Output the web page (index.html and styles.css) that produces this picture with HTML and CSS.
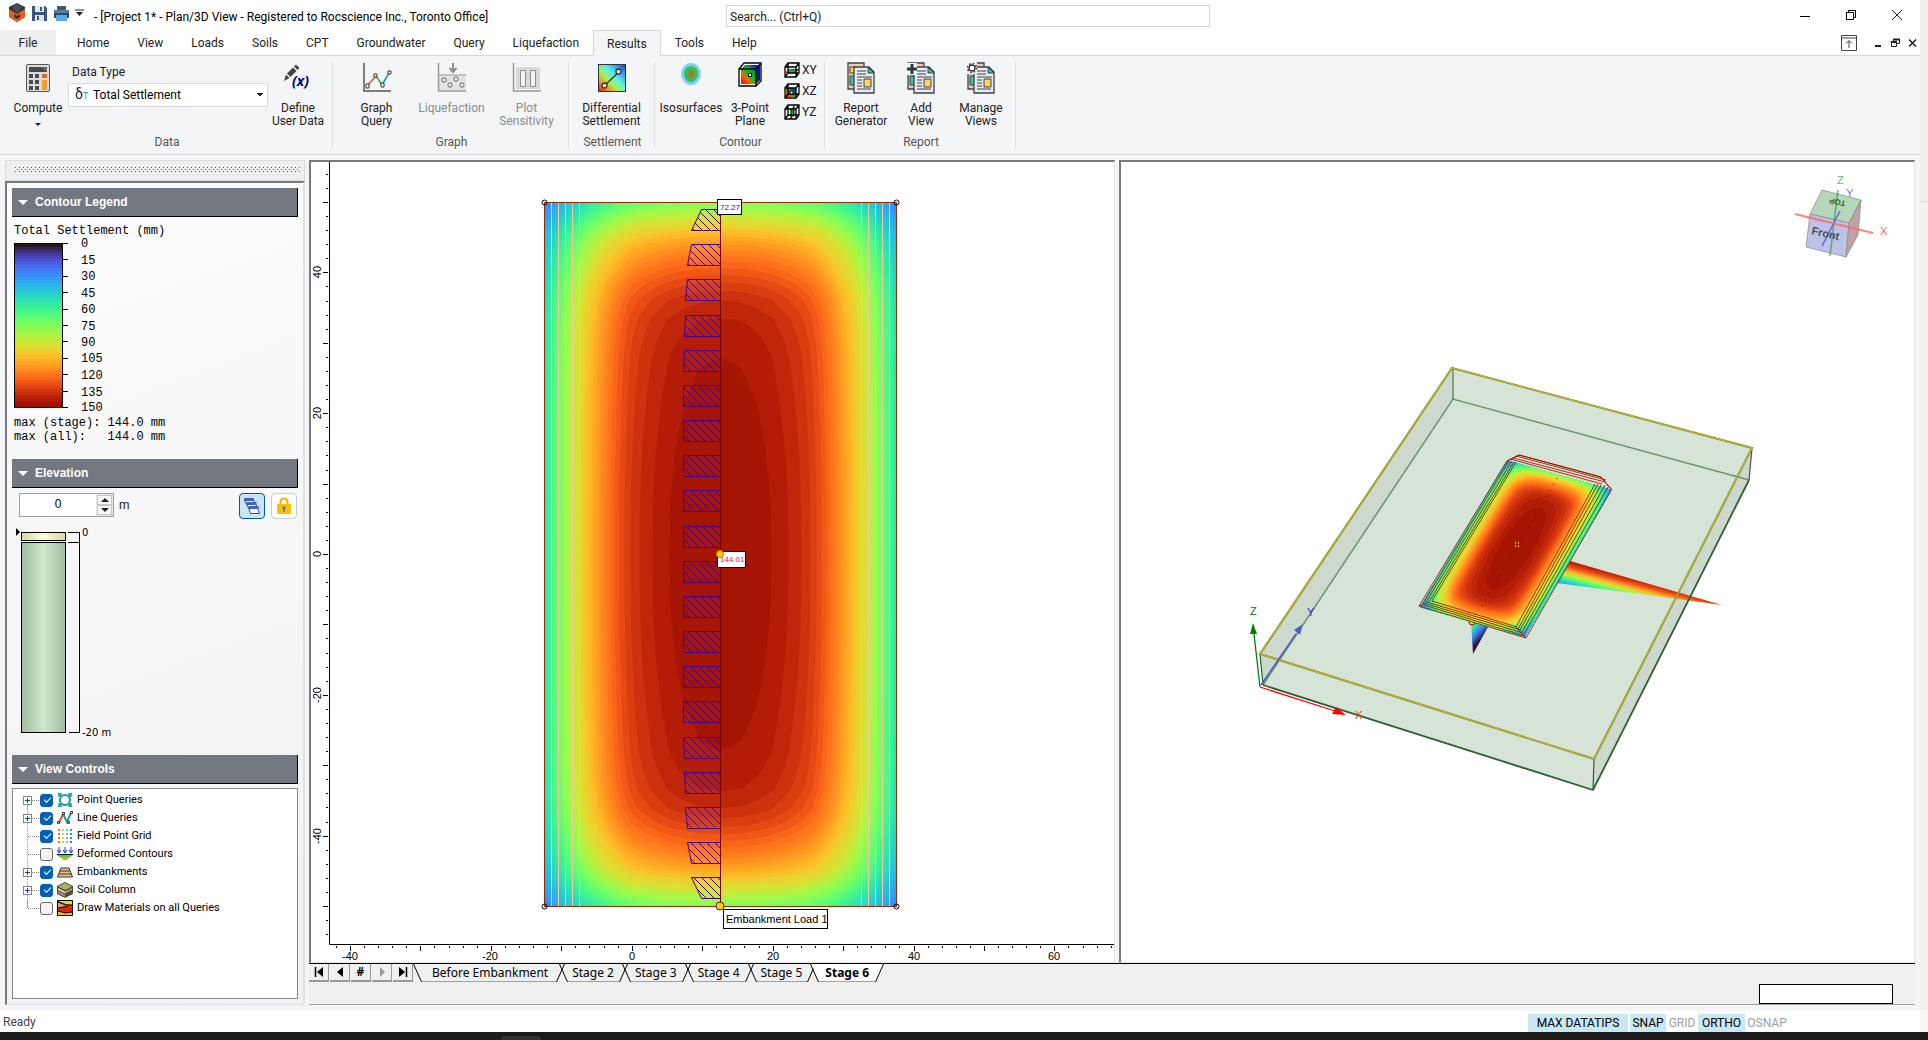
FILE: index.html
```html
<!DOCTYPE html>
<html lang="en">
<head>
<meta charset="utf-8">
<title>Project 1 - Plan/3D View</title>
<link rel="stylesheet" href="styles.css">
</head>
<body>
<svg class="defs" width="0" height="0" aria-hidden="true">
  <defs>
    <linearGradient id="rainbow" x1="0" y1="1" x2="1" y2="0">
      <stop offset="0" stop-color="#d81c10"/><stop offset=".2" stop-color="#f08a28"/><stop offset=".38" stop-color="#a8f050"/><stop offset=".58" stop-color="#58f0e8"/><stop offset=".78" stop-color="#38a0f8"/><stop offset="1" stop-color="#1038d0"/>
    </linearGradient>
    <linearGradient id="cubeface" x1="0" y1="1" x2="1" y2="0">
      <stop offset=".1" stop-color="#ff2000"/><stop offset=".3" stop-color="#e87000"/><stop offset=".42" stop-color="#20b820"/><stop offset=".62" stop-color="#10a830"/><stop offset=".85" stop-color="#0020f0"/>
    </linearGradient>
    <symbol id="i-docs" viewBox="0 0 28 32">
      <path d="M1 1H17V27H1Z" fill="#f6c9a8" stroke="#3d4148" stroke-width="1.3"/>
      <path d="M3 5h6v6H3z" fill="#ffd766" stroke="#3d4148"/><path d="M3 14h5v9H3z" fill="#3fc1a2" stroke="#3d4148"/>
      <path d="M7 5H22L27 10V31H7Z" fill="#e8ebf2" stroke="#3d4148" stroke-width="1.3"/>
      <path d="M21 5v6h6z" fill="#3fc1a2" stroke="#3d4148"/>
      <path d="M10 9h9M10 12h9M10 15h15M10 18h5M10 21h5M10 24h5M10 27h14" stroke="#3d4148"/>
      <path d="M17 17h7v8h-7z" fill="#ffd35c" stroke="#3d4148"/>
    </symbol>
    <symbol id="i-wire" viewBox="0 0 16 16"><path d="M1 5H12V15H1ZM1 5L4 1H15V11L12 15M12 5L15 1M4 1V11H15M4 11L1 15" fill="none" stroke="#000" stroke-width="1.300"/></symbol>
    <symbol id="t-plus" viewBox="0 0 19 18"><path d="M11 9.500H19" stroke="#808080" stroke-dasharray="1 1"/><rect x="2.500" y="5.500" width="8" height="8" fill="#fff" stroke="#848484"/><path d="M4 9.500h5M6.500 7v5" stroke="#1c3f94"/></symbol>
    <symbol id="t-leaf" viewBox="0 0 19 18"><path d="M7 9.500H19" stroke="#808080" stroke-dasharray="1 1"/></symbol>
    <pattern id="hatch" width="8" height="8" patternUnits="userSpaceOnUse"><path d="M-1 -1L9 9" stroke="#4b0082"/></pattern>
    <linearGradient id="clay"><stop offset="0" stop-color="#9fbd9f"/><stop offset=".5" stop-color="#d0e6d0"/><stop offset="1" stop-color="#a1bca0"/></linearGradient>
    <linearGradient id="sand"><stop offset="0" stop-color="#dcd79c"/><stop offset=".5" stop-color="#ffffd8"/><stop offset="1" stop-color="#dcd79c"/></linearGradient>
    <linearGradient id="beam" gradientUnits="userSpaceOnUse" x1="1570" y1="561" x2="1564" y2="584">
      <stop offset="0" stop-color="#a81000"/><stop offset=".25" stop-color="#f05018"/><stop offset=".45" stop-color="#fcb830"/><stop offset=".6" stop-color="#b8f438"/><stop offset=".75" stop-color="#50f878"/><stop offset=".9" stop-color="#20d0d8"/><stop offset="1" stop-color="#30a0f8"/>
    </linearGradient>
    <linearGradient id="dip" gradientUnits="userSpaceOnUse" x1="1471" y1="624" x2="1484" y2="636">
      <stop offset="0" stop-color="#80f850"/><stop offset=".3" stop-color="#28d8c0"/><stop offset=".6" stop-color="#3c80f4"/><stop offset="1" stop-color="#30123b"/>
    </linearGradient>
  </defs>
</svg>

<div class="screen">
<div class="app">
  <header class="titlebar">
    <div class="quick">
      <svg width="18" height="20" viewBox="0 0 18 20"><path d="M9 0L17 4V14L9 19L1 14V4Z" fill="#30343a"/><path d="M1 6L9 11L17 6V14L9 19L1 14Z" fill="#e85c20"/><path d="M4 4L9 1L14 4L9 10Z" fill="#4a4f56"/><path d="M6 11L9 13L12 11V14L9 16L6 14Z" fill="#30343a"/></svg>
      <svg width="17" height="17" viewBox="0 0 17 17"><path d="M1 1H14L16 3V16H1Z" fill="#3b5680"/><path d="M4 1h9v6H4z" fill="#e4edf8"/><path d="M4 10h9v6H4z" fill="#dfe6ef"/><path d="M9 2h2v4H9zM6 11h2v4H6z" fill="#3b5680"/></svg>
      <svg width="17" height="17" viewBox="0 0 17 17"><path d="M4 1h9v4H4z" fill="#4d5560"/><path d="M1 5h15v8H1z" fill="#38485c"/><path d="M3 10h11v6H3z" fill="#59a9e8"/><path d="M1 5h15v3H1z" fill="#4d7fae"/></svg>
      <svg width="9" height="8" viewBox="0 0 9 8"><path d="M0 1h9" stroke="#222"/><path d="M1 3h7L4.500 7z" fill="#222"/></svg>
    </div>
    <h1 class="title">- [Project 1* - Plan/3D View - Registered to Rocscience Inc., Toronto Office]</h1>
    <input class="search" type="text" aria-label="Search" placeholder="Search... (Ctrl+Q)">
    <div class="winbtns">
      <button aria-label="Minimize"><svg width="12" height="12"><path d="M1 7.500h10" stroke="#000"/></svg></button>
      <button aria-label="Restore"><svg width="12" height="12"><path d="M1.500 3.500h7v7h-7zM3.500 3V1.500h7v7H9" fill="none" stroke="#000"/></svg></button>
      <button aria-label="Close"><svg width="12" height="12"><path d="M1 1L11 11M11 1L1 11" stroke="#222"/></svg></button>
    </div>
  </header>

  <nav class="menu">
    <button class="file">File</button><button>Home</button><button>View</button><button>Loads</button><button>Soils</button><button>CPT</button><button>Groundwater</button><button>Query</button><button>Liquefaction</button><button class="current">Results</button><button>Tools</button><button>Help</button>
    <div class="docbtns">
      <button aria-label="Collapse ribbon"><svg width="16" height="17"><path d="M.5 1.500h15v15H.5zM.5 4h15M8 14V7M5 9.500L8 6.500L11 9.500" fill="none" stroke="#444"/></svg></button>
      <button aria-label="Minimize view"><svg width="9" height="10"><path d="M1 8h6" stroke="#222" stroke-width="2"/></svg></button>
      <button aria-label="Restore view"><svg width="9" height="10"><path d="M.5 4.500h5v4h-5zM2.500 4V1.500h6v4H6" fill="none" stroke="#222"/><path d="M0 4h6M2 1.500h7" stroke="#222" stroke-width="2"/></svg></button>
      <button aria-label="Close view"><svg width="9" height="10"><path d="M1 1.500L8 8.500M8 1.500L1 8.500" stroke="#222" stroke-width="1.600"/></svg></button>
    </div>
  </nav>

  <div class="ribbon">
    <section class="group g-data">
      <div class="tools">
        <button class="tool w-compute">
          <svg width="24" height="32" viewBox="0 0 24 32"><rect x=".5" y="2.500" width="23" height="27" rx="1.500" fill="#dcdcdc" stroke="#555"/><path d="M3 5h18v5H3z" fill="#484848"/><path d="M14 5h7v5z" fill="#666"/><path d="M3 12h4v4H3zM9 12h4v4H9zM3 18h4v4H3zM9 18h4v4H9zM3 24h4v4H3zM9 24h4v4H9z" fill="#4c4c4c"/><path d="M16 12h5v4h-5z" fill="#e8641e"/><path d="M16 18h5v10h-5z" fill="#f79a30"/></svg>
          <span>Compute</span><i class="down"></i></button>
        <div class="dtype">
          <label for="dt">Data Type</label>
          <div class="combo"><span class="delta">δ<sub>T</sub></span><select id="dt"><option>Total Settlement</option></select></div>
        </div>
        <button class="tool w-define">
          <svg width="28" height="32" viewBox="0 0 28 32"><path d="M0 19L2 12.500L5.500 16Z" fill="#444"/><path d="M3 11.500L9 5.500L12.500 9L6.500 15Z" fill="#444"/><path d="M10 4.500L12 2.500L15.500 6L13.500 8Z" fill="#444"/><text x="8" y="24" class="fx">(x)</text></svg>
          <span>Define<br>User Data</span></button>
      </div>
      <h2>Data</h2>
    </section>
    <section class="group g-graph">
      <div class="tools">
        <button class="tool w-m"><svg width="30" height="32" viewBox="0 0 30 32"><path d="M2 1V29H29" fill="none" stroke="#555" stroke-width="1.500"/><path d="M5 24L14 14" stroke="#f05030" stroke-width="1.500"/><path d="M14 14L20 23" stroke="#30b030" stroke-width="1.500"/><path d="M20 23L27 11" stroke="#00a0b0" stroke-width="1.500"/><path d="M4 22h3v4H4zM12 12h3v3h-3zM19 21h3v4h-3zM26 9h3v3h-3z" fill="#fff" stroke="#333"/></svg><span>Graph<br>Query</span></button>
        <button class="tool w-m" disabled><svg width="30" height="32" viewBox="0 0 30 32"><path d="M2 13h27v15H2z" fill="#e3e3e3"/><path d="M1.500 1V29H29" fill="none" stroke="#999" stroke-width="1.500"/><path d="M2 13h27" stroke="#999"/><path d="M16 1V9M12.500 6L16 10L19.500 6" fill="none" stroke="#8c8c8c" stroke-width="2"/><g fill="#f4f5f7" stroke="#8c8c8c" stroke-width="1.300"><circle cx="7" cy="18" r="2"/><circle cx="13" cy="23" r="2"/><circle cx="19" cy="17" r="2"/><circle cx="25" cy="23" r="2"/></g></svg><span>Liquefaction</span></button>
        <button class="tool w-m" disabled><svg width="30" height="32" viewBox="0 0 30 32"><path d="M1.500 1V29H29" fill="none" stroke="#999" stroke-width="1.500"/><path d="M4 5h24v22H4z" fill="#d9d9d9"/><path d="M8.500 8.500h5v16h-5zM18.500 8.500h5v16h-5z" fill="#f4f5f7" stroke="#8c8c8c"/></svg><span>Plot<br>Sensitivity</span></button>
      </div>
      <h2>Graph</h2>
    </section>
    <section class="group g-settle">
      <div class="tools">
        <button class="tool w-m"><svg width="28" height="32" viewBox="0 0 28 32"><rect x=".5" y="2.500" width="27" height="27" fill="url(#rainbow)" stroke="#333"/><path d="M7 23L21 10" stroke="#333" stroke-width="1.300"/><circle cx="6.500" cy="23.500" r="2.500" fill="#ffeeb0" stroke="#333" stroke-width="1.300"/><circle cx="20.500" cy="9.500" r="2.500" fill="#ffeeb0" stroke="#333" stroke-width="1.300"/></svg><span>Differential<br>Settlement</span></button>
      </div>
      <h2>Settlement</h2>
    </section>
    <section class="group g-contour">
      <div class="tools">
        <button class="tool w-iso"><svg width="22" height="32" viewBox="0 0 22 32"><ellipse cx="11" cy="12" rx="10" ry="11" fill="#84cdfa"/><ellipse cx="11" cy="12" rx="7" ry="8" fill="#28c458"/><ellipse cx="11" cy="12" rx="4" ry="5" fill="#789c38"/><ellipse cx="11" cy="12" rx="2" ry="3" fill="#a87030"/></svg><span>Isosurfaces</span></button>
        <button class="tool w-pt"><svg width="24" height="32" viewBox="0 0 24 32"><path d="M1 7L6 1H23L18 7Z" fill="#fff"/><path d="M3 7L7 3H22V18L18 22H3Z" fill="url(#cubeface)"/><path d="M19 7L22 3V18L19 21Z" fill="#0018b0"/><path d="M1 7H18V24H1ZM1 7L6 1H23V19L18 24M18 7L23 1" fill="none" stroke="#000" stroke-width="1.300"/><path d="M10.500 11.500h3v3h-3z" fill="#fff" stroke="#000"/></svg><span>3-Point<br>Plane</span></button>
        <div class="planes">
          <button><svg width="16" height="16"><path d="M1 11L5 7H15L12 11Z" fill="url(#cubeface)"/><use href="#i-wire"/></svg>XY</button>
          <button><svg width="16" height="16"><path d="M2 5H12V14H2Z" fill="url(#cubeface)"/><use href="#i-wire"/><path d="M6 8h3v3H6z" fill="#fff" stroke="#000"/></svg>XZ</button>
          <button><svg width="16" height="16"><path d="M7 5L10 2V12L7 15Z" fill="url(#cubeface)"/><use href="#i-wire"/><path d="M7 5V15M10 2V12" stroke="#000"/></svg>YZ</button>
        </div>
      </div>
      <h2>Contour</h2>
    </section>
    <section class="group g-report">
      <div class="tools">
        <button class="tool w-rep"><svg width="28" height="32"><use href="#i-docs"/></svg><span>Report<br>Generator</span></button>
        <button class="tool w-rep"><svg width="28" height="32"><use href="#i-docs"/><path d="M-1 1h11v12H-1z" fill="#f4f5f7"/><path d="M5 2V12M0 7H10" stroke="#333640" stroke-width="3"/></svg><span>Add<br>View</span></button>
        <button class="tool w-rep"><svg width="28" height="32"><use href="#i-docs"/><path d="M-1 0h11v12H-1z" fill="#f4f5f7"/><circle cx="5" cy="6" r="3" fill="#fff" stroke="#333640" stroke-width="1.400"/><circle cx="5" cy="6" r="4.500" fill="none" stroke="#333640" stroke-width="1.600" stroke-dasharray="1.600 1.930"/></svg><span>Manage<br>Views</span></button>
      </div>
      <h2>Report</h2>
    </section>
  </div>

  <main class="work">
    <aside class="dock">
      <div class="grip"><i></i></div>
      <div class="panels">
        <section class="panel p-legend">
          <h3><button>Contour Legend</button></h3>
          <svg class="legend" width="286" height="228" viewBox="0 0 286 228">
            <text x="2" y="17">Total Settlement (mm)</text>
            <g id="legend-bands"></g>
            <rect x="2.500" y="26.500" width="48" height="164" fill="none" stroke="#000"/>
            <g id="legend-ticks" stroke="#000"></g>
            <g><text x="69" y="30">0</text><text x="69" y="47">15</text><text x="69" y="63">30</text><text x="69" y="80">45</text><text x="69" y="96">60</text><text x="69" y="113">75</text><text x="69" y="129">90</text><text x="69" y="145">105</text><text x="69" y="162">120</text><text x="69" y="179">135</text><text x="69" y="194">150</text></g>
            <text x="2" y="209">max (stage): 144.0 mm</text>
            <text x="2" y="223" xml:space="preserve">max (all):   144.0 mm</text>
          </svg>
        </section>
        <section class="panel p-elev">
          <h3><button>Elevation</button></h3>
          <div class="elev-row">
            <div class="spin"><input type="text" id="elev" value="0"><span class="arrows"><button aria-label="Raise"><i class="up"></i></button><button aria-label="Lower"><i class="down"></i></button></span></div>
            <label for="elev">m</label>
            <button class="sq on" aria-label="Layers"><svg width="18" height="18"><g fill="#f4f6fc" stroke="#3b4a80"><path d="M1.500 2.500h9l2 5h-9z"/><path d="M3.500 6.500h9l2 5h-9z"/><path d="M5.500 10.500h9l2 6h-9z"/></g><path d="M1 2.500h10M3.500 6.500h10M5.500 10.500h10" stroke="#4060d0" stroke-width="3"/></svg></button>
            <button class="sq" aria-label="Lock"><svg width="16" height="18"><path d="M4.500 8V5a3.500 3.500 0 0 1 7 0V8" fill="none" stroke="#f5b400" stroke-width="2.200"/><rect x="1" y="7" width="14" height="10" rx="1" fill="#fbc108"/><circle cx="8" cy="11" r="1.800" fill="#777"/><path d="M8 11v4" stroke="#777" stroke-width="1.500"/></svg></button>
          </div>
          <svg class="column" width="286" height="222" viewBox="0 0 286 222">
            <path d="M4 7L8 11L4 15Z"/>
            <rect x="9.500" y="11.500" width="44" height="8" fill="url(#sand)" stroke="#000"/>
            <rect x="9.500" y="21.500" width="44" height="190" fill="url(#clay)" stroke="#000"/>
            <path d="M56 11.500H67.500V211.500H57M56 21.500H67" fill="none" stroke="#000"/>
            <text x="70" y="15">0</text><text x="70" y="215">-20 m</text>
          </svg>
        </section>
        <section class="panel p-view">
          <h3><button>View Controls</button></h3>
          <ul class="tree">
            <li><svg class="br" width="19" height="18"><use href="#t-plus"/></svg><label><input type="checkbox" checked><svg width="16" height="16"><circle cx="8" cy="8" r="5" fill="none" stroke="#1899a8" stroke-width="2"/><path d="M2 5V2H5M11 2h3v3M14 11v3h-3M5 14H2v-3M1 1l3 3M15 1l-3 3M1 15l3-3M15 15l-3-3" fill="none" stroke="#1899a8" stroke-width="1.400"/></svg>Point Queries</label></li>
            <li><svg class="br" width="19" height="18"><use href="#t-plus"/></svg><label><input type="checkbox" checked><svg width="16" height="16"><path d="M2 13L6 4" stroke="#f05030" stroke-width="2"/><path d="M6 4L10 12L14 3" fill="none" stroke="#18a088" stroke-width="2"/><path d="M.5 11.500h2v2h-2zM5.500 2.500h2v2h-2zM10.500 11.500h2v2h-2zM13.500 1.500h2v2h-2z" fill="#fff" stroke="#333"/></svg>Line Queries</label></li>
            <li><svg class="br" width="19" height="18"><use href="#t-leaf"/></svg><label><input type="checkbox" checked><svg width="16" height="16"><g stroke-width="2" stroke-dasharray="2 2"><path d="M2 1v15" stroke="#f07030"/><path d="M6 1v15" stroke="#e8d020"/><path d="M10 1v15" stroke="#60d890"/><path d="M14 1v15" stroke="#4080e0"/></g></svg>Field Point Grid</label></li>
            <li><svg class="br" width="19" height="18"><use href="#t-leaf"/></svg><label><input type="checkbox"><svg width="16" height="16"><path d="M2 1v6M8 1v6M14 1v6M0 4l2 3l2-3M6 4l2 3l2-3M12 4l2 3l2-3" fill="none" stroke="#2030f0"/><path d="M0 9h16L12 12H4Z" fill="#40d060"/><path d="M4 11h8L10 14H6Z" fill="#f0a020"/><path d="M0 8.500h16" stroke="#111"/></svg>Deformed Contours</label></li>
            <li><svg class="br" width="19" height="18"><use href="#t-plus"/></svg><label><input type="checkbox" checked><svg width="16" height="16"><path d="M4 4h8l3.500 9H.5z" fill="#efc48c" stroke="#333"/><path d="M3 7h10M2 10h12" stroke="#333"/></svg>Embankments</label></li>
            <li><svg class="br" width="19" height="18"><use href="#t-plus"/></svg><label><input type="checkbox" checked><svg width="16" height="16"><path d="M8 0L16 4V12L8 16L0 12V4Z" fill="#54493a"/><path d="M8 1L15 4.500L8 8L1 4.500Z" fill="#9cb860"/><path d="M1 6L8 9.500V11.500L1 8Z" fill="#e8dca8"/><path d="M15 6L8 9.500V11.500L15 8Z" fill="#b0a070"/><path d="M1 9L8 12.500V15L1 11.500Z" fill="#9a9468"/></svg>Soil Column</label></li>
            <li><svg class="br" width="19" height="18"><use href="#t-leaf"/></svg><label><input type="checkbox"><svg width="16" height="16"><path d="M.5.5h15v15H.5z" fill="#e82010" stroke="#000"/><path d="M1 1h14v4L9 4z" fill="#c8f000"/><path d="M1 2L10 6L1 8Z" fill="#c8a880"/><path d="M1 11L8 13L15 12V15H1Z" fill="#f8c010"/><path d="M1 2L9 5L15 5M1 8L10 6.500M1 11L8 13L15 12" fill="none" stroke="#000"/></svg>Draw Materials on all Queries</label></li>
          </ul>
        </section>
      </div>
    </aside>

    <div class="stage">
      <div class="views">
        <div class="view">
          <svg id="plan" viewBox="311 162 803 800" preserveAspectRatio="xMinYMin meet">
            <g id="field-host" transform="translate(544.5 202.5)"><g id="field"></g></g>
            <path class="shoulder" d="M551.500 203V906M558.500 203V906M565.500 203V906M572.500 203V906M579.500 203V906M861.500 203V906M868.500 203V906M875.500 203V906M882.500 203V906M889.500 203V906"/>
            <rect x="544.500" y="202.500" width="352" height="704" fill="none" stroke="#9c2a00"/>
            <g fill="none" stroke="#000"><circle cx="544.500" cy="202.500" r="2.500"/><circle cx="896.500" cy="202.500" r="2.500"/><circle cx="544.500" cy="906.500" r="2.500"/><circle cx="896.500" cy="906.500" r="2.500"/></g>
            <g id="blocks" fill="url(#hatch)" stroke="#4b0082"></g>
            <path d="M720.500 203V906" stroke="#7a0000"/>
            <path d="M329.500 162V944.500H1114" fill="none" stroke="#000"/>
            <path id="ticks" stroke="#000"/>
            <g class="axis"><text x="350" y="960">-40</text><text x="490" y="960">-20</text><text x="632" y="960">0</text><text x="773" y="960">20</text><text x="914" y="960">40</text><text x="1054" y="960">60</text>
            <text transform="translate(321 272) rotate(-90)">40</text><text transform="translate(321 413) rotate(-90)">20</text><text transform="translate(321 554) rotate(-90)">0</text><text transform="translate(321 695) rotate(-90)">-20</text><text transform="translate(321 836) rotate(-90)">-40</text></g>
            <g fill="#fff" stroke="#000"><rect x="717.500" y="199.500" width="24" height="15"/><rect x="717.500" y="551.500" width="28" height="16"/><rect x="723.500" y="909.500" width="104" height="19"/></g>
            <text x="720" y="210" class="val" fill="#2020f0">72.27</text><text x="720" y="562" class="val" fill="#f02020">144.01</text>
            <text x="726" y="923" class="tip">Embankment Load 1</text>
            <g fill="#ffd700" stroke="#8b0000"><circle cx="720" cy="554" r="3.500" stroke="#e07000"/><circle cx="720" cy="906" r="4"/></g>
          </svg>
        </div>
        <div class="view">
          <svg viewBox="1121 162 793 800" preserveAspectRatio="xMaxYMin meet">
            <path d="M1452 368L1752 448L1749 480L1593 790L1263 685L1260 654Z" fill="#d6e4d7"/>
            <path d="M1452 368L1260 654L1263 685L1453 399ZM1752 448L1594 759L1593 790L1749 480Z" fill="#ccd9cc"/>
            <path d="M1263 685L1453 399L1749 480" fill="none" stroke="#6b9469" stroke-width="1.500"/>
            <path d="M1570 561L1722 605L1557 583Z" fill="url(#beam)"/><path d="M1471 622L1488 627L1473 654Z" fill="url(#dip)"/>
            <circle cx="1472" cy="622" r="3" fill="#ffd700" stroke="#8b0000"/>
            <path d="M1507 461L1519 455L1601 477L1611 489" fill="#ecdcd0" stroke="#8b1a00"/>
            <g transform="matrix(.2983 .0838 -.1236 .2088 1507 460.300)"><use href="#field"/></g>
            <path class="crest" d="M1510 459L1602 484M1513 458L1605 482M1516 456L1606 480M1507 461L1519 455L1601 477L1612 490M1507 461L1419 606L1526 638L1611 490M1509 461L1422 605M1512 461L1425 604M1514 462L1429 602M1516 462L1432 601M1419 606L1430 602M1424 605L1525 636M1427 604L1523 633M1430 603L1521 630M1432 601L1517 627M1516 627L1526 638M1524 634L1608 487M1522 632L1605 485M1520 630L1601 485M1518 629L1598 484M1516 627L1595 484"/>
            <path d="M1557 478L1482 606" stroke="#6a0a00" stroke-dasharray="1 6"/>
            <path d="M1515 543h1m2 0h1m-4 3h1m2 0h1" stroke="#ff0" stroke-width="1.500"/>
            <path d="M1453 399V368" stroke="#2f5f35"/>
            <path d="M1749 480L1593 790L1263 685" fill="none" stroke="#2f5f35" stroke-width="1.800"/>
            <path d="M1752 448L1749 480M1594 759L1593 790M1260 654L1263 685" stroke="#2f5f35" stroke-width="1.200"/>
            <path d="M1452 368L1752 448L1594 759L1260 654Z" fill="none" stroke="#8f8a00" stroke-width="2"/>
            <path d="M1452 368L1752 448L1594 759L1260 654Z" fill="none" stroke="#d8d8a0" stroke-width=".6"/>
            <path d="M1260 687L1254 634" stroke="#008000" stroke-width="1.300"/><path d="M1250 634L1253 623L1257 634Z" fill="#008000"/>
            <path d="M1260 687L1335 711" stroke="#f00" stroke-width="1.300"/><path d="M1336 707L1346 715L1332 714Z" fill="#f00"/>
            <path d="M1261 685L1296 634" stroke="#4a60b8" stroke-width="1.500"/><path d="M1303 624L1300 635L1294 630Z" fill="#4a60c8"/>
            <g class="mark"><text x="1250" y="615" fill="#008000">Z</text><text x="1307" y="616" fill="#1030d0">Y</text><text x="1355" y="719" fill="#e04030">X</text></g>
            <g stroke="#888" stroke-opacity=".7">
              <path d="M1822 190L1861 200L1849 223L1810 214Z" fill="#b5d8ba"/><path d="M1810 214L1849 223L1846 257L1806 247Z" fill="#bec2e6"/><path d="M1849 223L1861 200L1858 235L1846 257Z" fill="#c3a0a4"/>
            </g>
            <path d="M1838 190L1830 256" stroke="#38a048" stroke-width="1.600" stroke-opacity=".7"/><path d="M1822 246L1840 211" stroke="#5050f0" stroke-width="1.600" stroke-opacity=".8"/>
            <path d="M1795 214L1873 233" stroke="#ff6a6a" stroke-width="2" stroke-opacity=".85"/>
            <text class="face" transform="translate(1811 234) rotate(13)">Front</text><text class="face small" transform="translate(1846 201) rotate(192)">TOP</text>
            <g class="mark"><text x="1837" y="184" fill="#60b868">Z</text><text x="1846" y="197" fill="#7070ff">Y</text><text x="1880" y="235" fill="#ff6060">X</text></g>
          </svg>
        </div>
      </div>
      <div class="stagebar">
        <button class="nav" aria-label="First stage"><svg width="12" height="12"><path d="M2.500 1v10" stroke="#000" stroke-width="1.500"/><path d="M10 1v10L4 6z"/></svg></button>
        <button class="nav" aria-label="Previous stage"><svg width="12" height="12"><path d="M9 1v10L3 6z"/></svg></button>
        <button class="nav" aria-label="Stage number">#</button>
        <button class="nav" aria-label="Next stage"><svg width="12" height="12"><path d="M4 1v10l5-5z" fill="#999"/></svg></button>
        <button class="nav" aria-label="Last stage"><svg width="12" height="12"><path d="M2 1v10l6-5z"/><path d="M9.500 1v10" stroke="#000" stroke-width="1.500"/></svg></button>
        <button class="stab first"><i></i>Before Embankment</button><button class="stab"><i></i>Stage 2</button><button class="stab"><i></i>Stage 3</button><button class="stab"><i></i>Stage 4</button><button class="stab"><i></i>Stage 5</button><button class="stab on"><i></i>Stage 6</button>
        <output class="readout" aria-label="Coordinates"></output>
      </div>
    </div>
  </main>

  <footer class="status">
    <span class="ready">Ready</span>
    <button class="on w100">MAX DATATIPS</button><button class="on w36">SNAP</button><button class="w30">GRID</button><button class="on w47">ORTHO</button><button class="w40">OSNAP</button>
  </footer>
</div>
<div class="edge"></div>
<div class="taskbar"><i></i></div>
</div>
<script src="plot.js"></script>
</body>
</html>
```
FILE: styles.css
```css
* { box-sizing: border-box; }
body { margin: 0; font: 12px/13px Roboto, "Noto Sans", sans-serif; color: #222; background: #fff; }
button { font: inherit; color: inherit; background: none; border: 0; padding: 0; margin: 0; }
h1, h2, h3, ul { margin: 0; padding: 0; font-size: 12px; font-weight: normal; }
svg { display: block; flex: none; }
.defs { position: absolute; }

.screen { display: grid; grid-template-columns: 1fr 8px; grid-template-rows: 1fr 8px; height: 100vh; }
.app { display: flex; flex-direction: column; min-height: 0; min-width: 0; background: #f4f5f7; }
.edge { background: linear-gradient(#efefef 201px, #d8d8d8 201px, #d8d8d8 202px, #f1f1f1 202px); border-bottom: 22px solid #f6f6f6; }
.taskbar { grid-column: 1 / 3; background: #1c1c1c; padding: 4px 0 0 501px; }
.taskbar i { display: block; width: 40px; height: 4px; background: #333; border-radius: 4px 4px 0 0; }

/* title bar */
.titlebar { display: flex; align-items: center; height: 30px; background: #fff; padding: 0 17px 0 8px; position: relative; }
.quick { display: flex; align-items: center; gap: 5px; width: 86px; padding-bottom: 4px; }
.title { color: #000; padding-top: 4px; flex: 1; }
.search { position: absolute; left: 726px; top: 5px; width: 484px; height: 22px; border: 1px solid #d2d4d8; padding: 1px 3px 0; font: inherit; background: #fff; }
.search::placeholder { color: #222; opacity: 1; }
.winbtns { display: flex; gap: 34px; }

/* menu tabs */
.menu { display: flex; height: 26px; background: #fff; border-bottom: 1px solid #d5d7db; }
.menu > button { padding: 2px 14px 0; }
.menu .file { background: #efefef; width: 56px; margin-right: 7px; }
.menu .current { background: #f4f5f7; border: 1px solid #d5d7db; border-bottom: 0; padding: 1px 13px 0; margin-bottom: -1px; }
.docbtns { display: flex; align-items: center; gap: 8px; margin-left: auto; padding: 0 3px 0 0; }
.docbtns button:first-child { margin-right: 9px; }

/* ribbon */
.ribbon { display: flex; height: 99px; border-bottom: 1px solid #d5d7db; padding: 6px 0; }
.group { display: flex; flex-direction: column; justify-content: space-between; border-right: 1px solid #dcdee2; }
.group h2 { text-align: center; color: #555; line-height: 12px; padding-left: 2px; }
.tools { display: flex; justify-content: center; }
.tool { display: flex; flex-direction: column; align-items: center; justify-content: flex-start; gap: 8px; line-height: 13px; height: 72px; }
.tool:disabled { color: #8c8c8c; }
.tool > span { white-space: nowrap; }
.w-compute { width: 56px; }
.w-define { width: 68px; }
.w-m { width: 75px; }
.w-iso { width: 66px; }
.w-pt { width: 52px; }
.w-rep { width: 60px; }
.g-data { width: 333px; }
.g-data .tools { justify-content: flex-start; padding-left: 10px; }
.g-graph { width: 236px; }
.g-settle { width: 86px; }
.g-contour { width: 170px; }
.g-contour .tools { justify-content: flex-start; padding-left: 3px; }
.g-report { width: 191px; }
.g-graph .tools, .g-report .tools { padding-left: 2px; }
.down, .up { border: 4px solid transparent; border-top: 4px solid #222; border-bottom: 0; }
.up { border: 4px solid transparent; border-bottom: 4px solid #222; border-top: 0; }
.w-compute .down { border-width: 3px 3px 0; }
.dtype { width: 200px; margin: 0 -4px 0 2px; padding-top: 4px; }
.dtype label { padding-left: 4px; display: block; }
.combo { display: flex; align-items: center; width: 200px; height: 24px; margin-top: 4px; background: #fff; border: 1px solid #d8dade; padding-left: 6px; }
.combo select { flex: 1; height: 22px; border: 0; appearance: none; font: inherit; color: #000; padding: 0 0 0 5px; background: linear-gradient(45deg, transparent 50%, #222 50%) no-repeat right 7px top 9px / 4px 4px, linear-gradient(-45deg, transparent 50%, #222 50%) no-repeat right 3px top 9px / 4px 4px, #fff; }
.delta { font-size: 14px; width: 13px; }
.delta sub { font-size: 9px; color: #1899a8; vertical-align: baseline; }
.fx { font: italic bold 14px "Open Sans", sans-serif; fill: #00007c; }
.planes { display: flex; flex-direction: column; gap: 5px; width: 36px; margin-left: 8px; }
.planes button { display: flex; align-items: center; gap: 2px; height: 16px; }

/* left dock */
.work { display: grid; grid-template-columns: 300px 1fr; gap: 4px; padding: 5px 5px 6px; flex: 1; min-height: 0; }
.dock { display: flex; flex-direction: column; min-height: 0; }
.grip { height: 21px; border: 1px solid #dcdce0; background: #eeeef0; padding: 6px 4px 6px 9px; }
.grip i { display: block; height: 6px; background: linear-gradient(#444, #444) 0 0 / 1px 1px, #eeeef0; background: conic-gradient(#555 0 0) 0 0 / 0 0 no-repeat, repeating-linear-gradient(90deg, #555 0 1px, transparent 1px 4px) 0 0 / 100% 1px no-repeat, repeating-linear-gradient(90deg, #555 0 1px, transparent 1px 4px) 2px 2px / 100% 1px no-repeat, repeating-linear-gradient(90deg, #555 0 1px, transparent 1px 4px) 0 4px / 100% 1px no-repeat; }
.panels { flex: 1; min-height: 0; border: solid; border-width: 2px 2px 1px 2px; border-color: #77797c #e2e2e4 #e2e2e4 #77797c; background: linear-gradient(160deg, #fcfcfc, #f1f1f1); padding: 5px; display: flex; flex-direction: column; }
.panel h3 { border: solid #000; border-width: 0 1px 1px 0; background: #73777f; }
.panel h3 button { display: flex; align-items: center; gap: 7px; width: 100%; height: 28px; padding-left: 6px; color: #fff; font: bold 12px "Liberation Sans", Arial, sans-serif; }
.panel h3 button::before { content: ""; border: 5px solid transparent; border-top-color: #fff; border-bottom: 0; }
.p-legend { height: 271px; }
.p-elev { height: 296px; }
.legend text { font: 12px "Liberation Mono", monospace; }
.column text { font: 10px "DejaVu Sans", sans-serif; }
.elev-row { display: flex; align-items: flex-start; padding: 5px 1px 0 7px; gap: 5px; height: 33px; }
.spin { display: flex; width: 95px; height: 24px; border: 1px solid #a0a0a0; background: #fff; }
.spin input { width: 76px; border: 0; background: none; text-align: center; padding: 0 0 3px; font: 12px "Liberation Sans", Arial, sans-serif; }
.arrows { display: flex; flex-direction: column; justify-content: space-between; width: 17px; background: #e8e8e8; padding: 1px; }
.arrows button { display: flex; align-items: center; justify-content: center; height: 10px; background: #f8f8f8; border: 1px solid #c8c8c8; }
.elev-row label { flex: 1; padding-top: 6px; }
.sq { display: flex; align-items: center; justify-content: center; width: 26px; height: 26px; border: 1px solid #ccc; border-radius: 4px; background: #fff; }
.sq.on { border-color: #0058a0; background: #cce4f7; margin-right: 1px; }
.p-view { flex: 1; min-height: 0; display: flex; flex-direction: column; }
.tree { flex: 1; list-style: none; margin-top: 4px; padding: 2px 0 0 8px; border: 1px solid #828790; background: #fff; font: 11px/18px Roboto, sans-serif; color: #000; }
.tree li { display: flex; height: 18px; background: linear-gradient(#999 50%, transparent 50%) 6px 0 / 1px 2px repeat-y; }
.tree li:first-child { background: linear-gradient(#999, #999) 6px 14px / 1px 4px no-repeat; }
.tree li:last-child { background: linear-gradient(#999, #999) 6px 0 / 1px 9px no-repeat; }
.tree label { display: flex; align-items: center; gap: 4px; }
.tree input { appearance: none; width: 13px; height: 13px; margin: 0; border: 1px solid #666; border-radius: 3px; background: #f4f4f4; }
.tree input:checked { border-color: #005fb8; background: #005fb8; position: relative; }
.tree input:checked::after { content: ""; position: absolute; left: 3px; top: 2px; width: 6px; height: 3px; border: solid #fff; border-width: 0 0 1px 1px; rotate: -45deg; }

/* views */
.stage { display: flex; flex-direction: column; min-width: 0; min-height: 0; background: #f0f0f0; border-bottom: 1px solid #a0a0a0; }
.views { display: grid; grid-template-columns: 806fr 796fr; gap: 4px; flex: 1; min-height: 0; background: #f4f5f7; }
.view { display: flex; min-width: 0; min-height: 0; background: #fff; border: solid; border-width: 2px 1px 1px 2px; border-color: #77797c #e4e4e4 #e4e4e4 #77797c; }
.view svg { flex: 1; min-width: 0; min-height: 0; width: 100%; height: 100%; }
.shoulder { stroke: #f8c8a0; fill: none; }
.axis text { font: 11px "Liberation Sans", Arial, sans-serif; text-anchor: middle; }
.val { font: 8px "Liberation Sans", Arial, sans-serif; }
.tip { font: 11px "Liberation Sans", Arial, sans-serif; }
.crest { fill: none; stroke: #8b1a00; stroke-width: 1; stroke-opacity: .85; }
.mark text { font: 11px "Liberation Sans", Arial, sans-serif; }
.face { font: bold 11px "Liberation Sans", Arial, sans-serif; fill: #4c4c60; }
.face.small { font-size: 8px; fill: #3c5c40; }

/* stage selector */
.stagebar { display: flex; align-items: flex-start; height: 41px; border-top: 1px solid #000; font: 12px/16px "Noto Sans", sans-serif; color: #000; }
.nav { display: flex; align-items: center; justify-content: center; width: 20px; height: 18px; margin-right: 1px; border: solid #999; border-width: 0 1px 2px 0; font-weight: bold; background: #f0f0f0; }
.stab { position: relative; z-index: 0; height: 18px; padding: 0 13px 0 12px; margin-left: -4px; white-space: nowrap; }
.stab.first { padding: 0 16px 0 18px; margin-left: 0; }
.stab::before, .stab::after { content: ""; position: absolute; top: 0; height: 18px; width: 1px; background: #000; z-index: 1; }
.stab::before { left: 3px; transform: skewX(24deg); }
.stab::after { right: 3px; transform: skewX(-24deg); }
.stab i { position: absolute; inset: 0; z-index: -1; background: linear-gradient(#a0a0a0, #a0a0a0) 0 100% / 100% 1px no-repeat; clip-path: polygon(0 0, 8px 100%, calc(100% - 8px) 100%, 100% 0); }
.stab.on { font-weight: bold; padding: 0 14px; }
.stab.on i { background-color: #fff; }
.readout { display: block; margin: 20px 22px 0 auto; width: 134px; height: 20px; border: 1px solid #000; background: #fff; }

/* status bar */
.status { display: flex; align-items: flex-end; gap: 1px; height: 21px; background: #fff; padding: 0 132px 0 3px; }
.status .ready { flex: 1; line-height: 19px; color: #444; }
.status button { height: 18px; color: #a0a0a0; line-height: 18px; }
.status button.on { color: #000; background: #c9e7f5; }
.status .w100 { width: 100px; margin-right: 1px; }
.status .w36 { width: 36px; }
.status .w30 { width: 30px; }
.status .w47 { width: 47px; }
.status .w40 { width: 42px; }
```
FILE: plot.js
```js
const NS = 'http://www.w3.org/2000/svg';
const $ = id => document.getElementById(id);
function add(parent, tag, attrs) {
  const e = document.createElementNS(NS, tag);
  for (const k in attrs) e.setAttribute(k, attrs[k]);
  parent.appendChild(e);
}

// Turbo colour map, t in 0..1
function turbo(t) {
  const poly = c => c.reduceRight((s, k) => s * t + k, 0);
  const ch = v => Math.round(255 * Math.max(0, Math.min(1, v)));
  const r = poly([0.1357, 4.6154, -42.6603, 132.1311, -152.9424, 59.2864]);
  const g = poly([0.0914, 2.1942, 4.8430, -14.1850, 4.2773, 2.8296]);
  const b = poly([0.1067, 12.6419, -60.5820, 110.3628, -89.9031, 27.3482]);
  return `rgb(${ch(r)},${ch(g)},${ch(b)})`;
}

// Settlement ratio against distance from the side and end of the load
const side = [[0, 50], [7, 60], [14, 69], [21, 78], [28, 86], [35, 93], [41, 100], [49, 107], [59, 115], [70, 123], [78, 128], [86, 132], [95, 135], [108, 138], [125, 141], [140, 142.6], [155, 143.6], [176, 144]];
const end = [[0, 72], [6, 78], [13, 85], [20, 92], [27, 99], [34, 105], [42, 111], [51, 116], [60, 120.5], [70, 125], [82, 130], [98, 135], [118, 138.4], [140, 140.2], [160, 141.2], [200, 142.4], [250, 143.4], [300, 143.9], [352, 144]];
function at(tab, x) {
  for (let i = 1; i < tab.length; i++) {
    if (x <= tab[i][0]) {
      const [x0, y0] = tab[i - 1], [x1, y1] = tab[i];
      return y0 + (y1 - y0) * (x - x0) / (x1 - x0);
    }
  }
  return 144;
}
function inverse(tab, y) {
  if (y <= tab[0][1]) return 0;
  for (let i = 1; i < tab.length; i++) {
    if (y <= tab[i][1]) {
      const [x0, y0] = tab[i - 1], [x1, y1] = tab[i];
      return x0 + (x1 - x0) * (y - y0) / (y1 - y0);
    }
  }
  return tab[tab.length - 1][0];
}

const W = 352, H = 704;
add($('field'), 'rect', { width: W, height: H, fill: turbo(0.17) });
for (let level = 27; level <= 141; level += 3) {
  const quarter = [];
  const start = inverse(side, level);
  for (let i = 0; i <= 40; i++) {
    const u = start + (W / 2 - start) * Math.pow(i / 40, 1.6);
    quarter.push([u, inverse(end, level * 144 / at(side, u))]);
  }
  if (start === 0) quarter.unshift([0, H / 2]);
  const p = [
    ...quarter,
    ...quarter.slice().reverse().map(([x, y]) => [W - x, y]),
    ...quarter.map(([x, y]) => [W - x, H - y]),
    ...quarter.slice().reverse().map(([x, y]) => [x, H - y])
  ];
  add($('field'), 'path', {
    d: 'M' + p.map(q => q[0].toFixed(1) + ' ' + q[1].toFixed(1)).join('L') + 'Z',
    fill: turbo(level / 150 - (level > 90 ? 0.012 : 0))
  });
}

// Stress profile blocks along the centre query line
const inset = [701, 691, 691, 687, 687, 685, 685, 684, 684, 683];
for (let i = 0; i < 20; i++) {
  const k = i < 10 ? i : 19 - i;
  let a = inset[2 * k] || 683, b = inset[2 * k + 1] || 683;
  if (i >= 10) [a, b] = [b, a];
  const y = Math.round(209 + 35.17 * i) + 0.5;
  add($('blocks'), 'path', { d: `M${a + .5} ${y}H720.5V${y + 21}H${b + .5}Z` });
}

// Rulers
let d = '';
for (let n = -42; n <= 68; n += 2) {
  const x = Math.round(631.7 + n * 7.045) + 0.5;
  d += `M${x} 946v${n % 10 ? 2 : 5}`;
}
for (let n = -54; n <= 54; n += 2) {
  const y = Math.round(554 - n * 7.04) + 0.5;
  d += `M${n % 10 ? 326 : 323} ${y}H328`;
}
$('ticks').setAttribute('d', d);

// Legend scale
for (let i = 0; i < 54; i++) {
  const y = 27 + i * 3.02;
  add($('legend-bands'), 'rect', { x: 3, y, width: 47, height: Math.min(3.6, 190 - y), fill: turbo(i / 56) });
}
for (let i = 0; i <= 10; i++) {
  add($('legend-ticks'), 'path', { d: `M51 ${Math.round(26 + i * 16.4) + 0.5}h5` });
}
```
